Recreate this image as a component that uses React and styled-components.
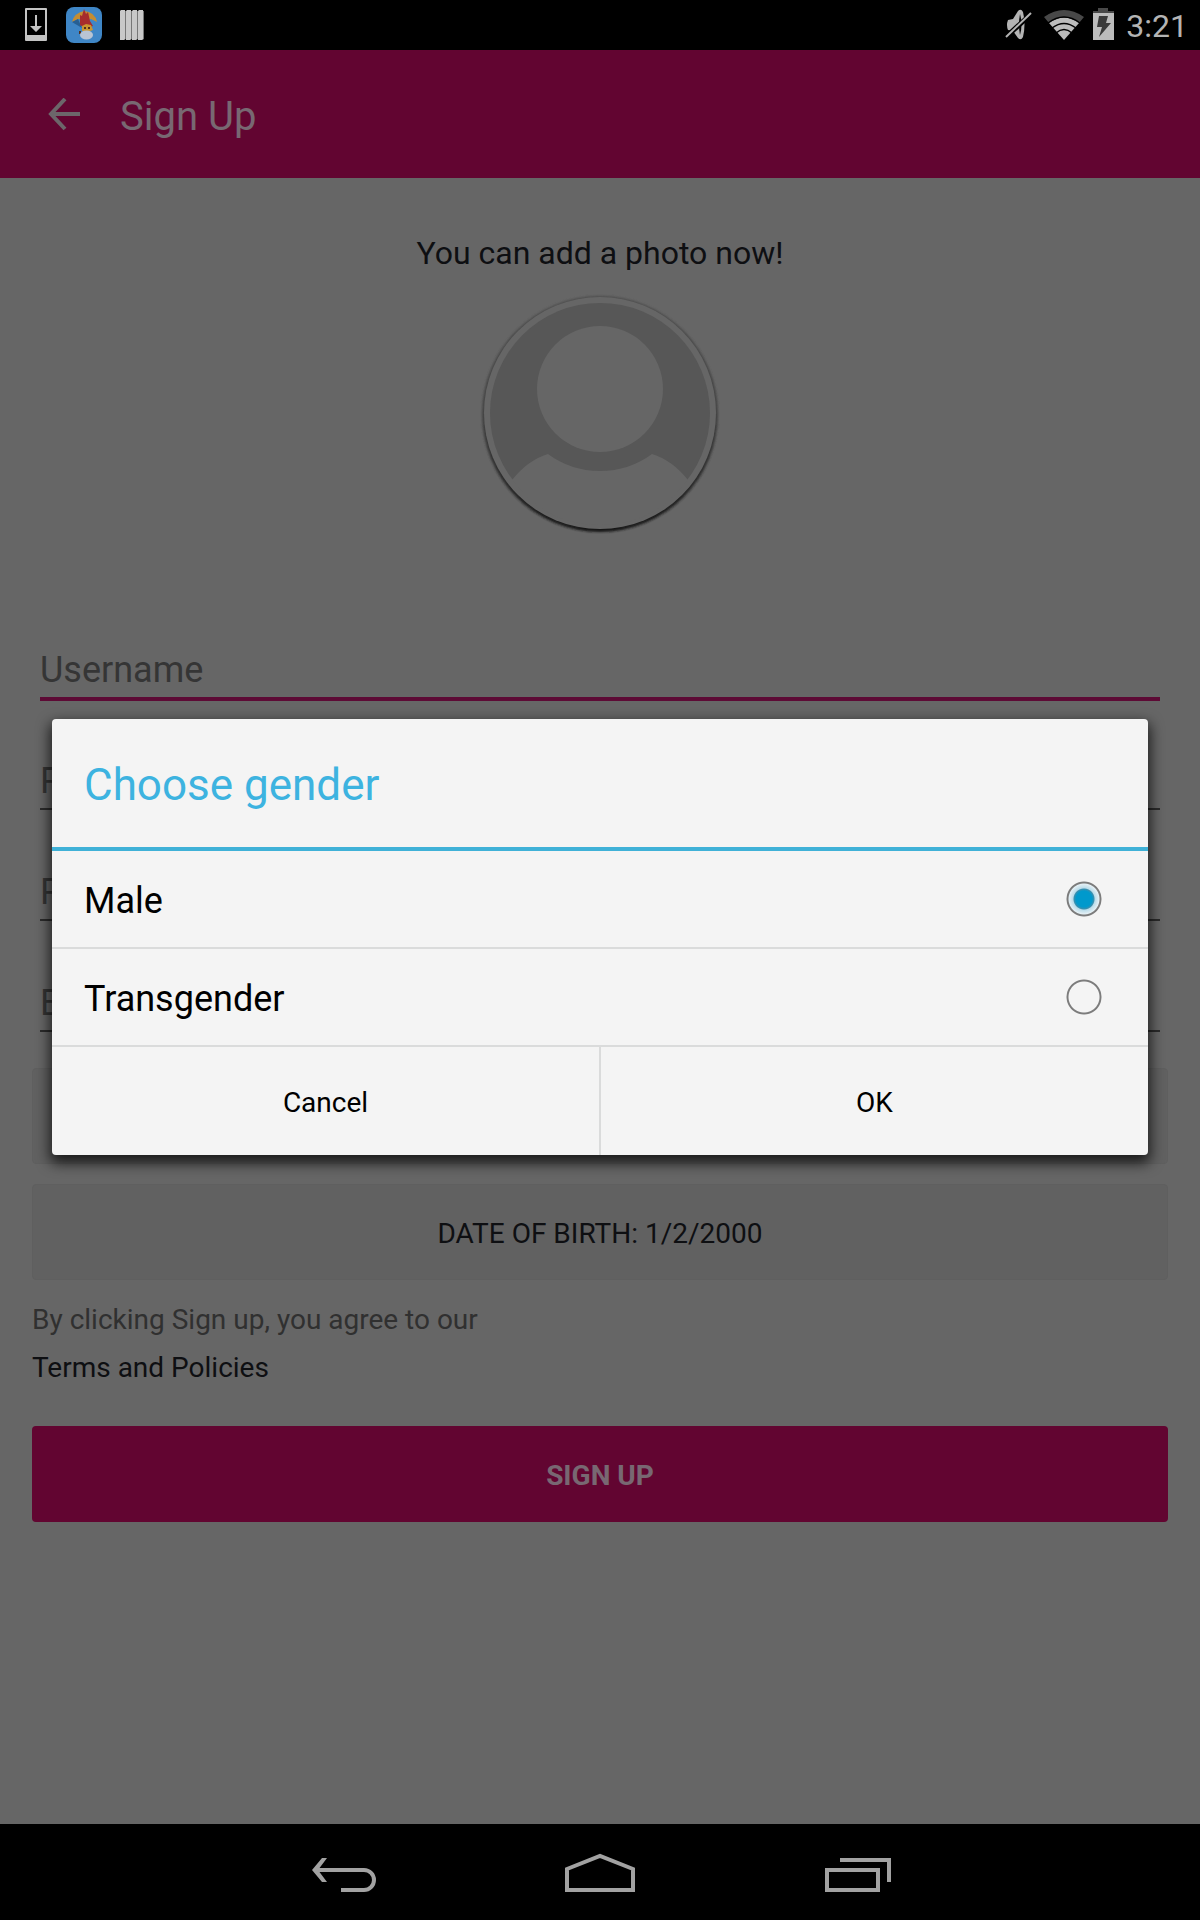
import React, { useState } from "react";
import styled, { createGlobalStyle } from "styled-components";

const GlobalStyle = createGlobalStyle`
  * { box-sizing: border-box; }
  body { margin: 0; background: #666666; font-family: Roboto, "Noto Sans", sans-serif; }
  button, input { font-family: inherit; }
`;

const Screen = styled.div`
  min-height: 100vh;
  display: flex;
  flex-direction: column;
`;

const StatusBar = styled.header`
  height: 50px;
  padding: 0 12px 0 25px;
  display: flex;
  align-items: center;
  justify-content: space-between;
  background: #000;
  color: #b4b4b4;
`;

const StatusGroup = styled.div`
  display: flex;
  align-items: center;
  gap: ${(p) => p.$gap}px;
`;

const Clock = styled.time`
  margin-left: 3px;
  padding-top: 2px;
  font-size: 32px;
  line-height: 40px;
`;

const Body = styled.div`
  position: relative;
  flex: 1;
  display: flex;
  flex-direction: column;
`;

const AppBar = styled.div`
  height: 128px;
  padding: 2px 40px 0;
  display: flex;
  align-items: center;
  gap: 32px;
  background: #620531;
  color: #786872;
`;

const IconButton = styled.button`
  display: flex;
  padding: 0;
  border: 0;
  background: none;
  color: #6c666a;
`;

const ScreenTitle = styled.h1`
  margin: 0;
  padding-top: 4px;
  font-size: 40px;
  line-height: 48px;
  font-weight: 400;
`;

const Form = styled.form`
  display: flex;
  flex-direction: column;
  padding: 56px 32px;
`;

const PhotoPrompt = styled.p`
  margin: 0 0 22px;
  text-align: center;
  font-size: 32px;
  line-height: 38px;
  color: #0e0f12;
`;

const PhotoButton = styled.button`
  align-self: center;
  display: flex;
  margin-bottom: 108px;
  padding: 0;
  border: 0;
  background: none;
`;

const Fields = styled.div`
  display: flex;
  flex-direction: column;
  gap: 54px;
  padding: 0 8px;
  margin-bottom: 36px;
`;

/* The focused line is 2px thicker and grows into the gap below it. */
const Field = styled.input`
  width: 100%;
  height: ${(p) => (p.$active ? 59 : 57)}px;
  margin: 0 0 ${(p) => (p.$active ? -2 : 0)}px;
  padding: 0;
  border: 0;
  border-bottom: ${(p) => (p.$active ? "4px solid #5d0a35" : "2px solid #2b2b2b")};
  outline: none;
  background: none;
  font-size: 36px;
  color: #0e0f12;
  &::placeholder { color: #353535; opacity: 1; }
`;

const Pickers = styled.div`
  display: flex;
  flex-direction: column;
  gap: 20px;
  margin-bottom: 16px;
`;

const FormButton = styled.button`
  height: 96px;
  padding: 4px 0 0;
  border: 1px solid #5f5f5f;
  border-radius: 4px;
  background: #616161;
  font-size: 28px;
  line-height: 32px;
  color: #0e0f12;
  text-transform: uppercase;
`;

const Terms = styled.p`
  margin: 0 0 34px;
  display: flex;
  flex-direction: column;
  align-items: flex-start;
  font-size: 28px;
  line-height: 48px;
  color: #303030;
`;

const TermsLink = styled.a`
  color: #0e0f12;
  text-decoration: none;
`;

const SubmitButton = styled(FormButton)`
  border: 0;
  background: #620531;
  font-weight: 700;
  color: #786872;
`;

const DialogLayer = styled.div`
  position: absolute;
  inset: 0;
  display: flex;
  align-items: center;
  padding: 0 52px;
`;

const Dialog = styled.div`
  flex: 1;
  display: flex;
  flex-direction: column;
  border-radius: 4px;
  background: #f4f4f4;
  box-shadow: 0 6px 14px 2px rgba(0, 0, 0, 0.75);
`;

const DialogTitle = styled.h2`
  margin: 0;
  height: 132px;
  padding: 4px 32px 0;
  display: flex;
  align-items: center;
  border-bottom: 4px solid #3fb1d7;
  font-size: 44px;
  line-height: 52px;
  font-weight: 400;
  color: #3db3e0;
`;

const Option = styled.label`
  height: 98px;
  padding: 0 46px 0 32px;
  display: flex;
  align-items: center;
  justify-content: space-between;
  border-bottom: 2px solid #dadbdb;
  font-size: 36px;
  line-height: 44px;
  color: #000;
`;

const OptionName = styled.span`
  padding-top: 4px;
`;

const Radio = styled.input`
  appearance: none;
  width: 36px;
  height: 36px;
  margin: 0;
  border: 0;
  border-radius: 50%;
  background: radial-gradient(circle, transparent 15px, #7c7c7c 16px, #7c7c7c 17px, transparent 18px);
  &:checked {
    background: radial-gradient(circle, #0099cc 8px, #3a8fae 10px, #b9dcea 11px, #e4eff4 15px, #7c7c7c 16px, #7c7c7c 17px, transparent 18px);
  }
`;

const Actions = styled.div`
  height: 108px;
  display: flex;
`;

const ActionButton = styled.button`
  flex: 1;
  padding: 4px 0 0;
  border: 0;
  border-left: ${(p) => (p.$divided ? "2px solid #dadbdb" : "0")};
  background: none;
  font-size: 28px;
  line-height: 32px;
  color: #000;
`;

const NavBar = styled.nav`
  height: 96px;
  padding-left: 2px;
  display: flex;
  align-items: center;
  justify-content: center;
  gap: 188px;
  background: #000;
`;

const DownloadIcon = () => (
  <svg width="23" height="34" viewBox="0 0 23 34" aria-hidden="true">
    <path fill="#c4c4c4" fillRule="evenodd" d="M1 0h20q1 0 1 1v31q0 1-1 1H1q-1 0-1-1V1q0-1 1-1zM2 2v25h18V2z" />
    <path fill="#c4c4c4" d="M10 7h2v11h5l-6 6L5 18h5z" />
  </svg>
);

const GameIcon = () => (
  <svg width="36" height="36" viewBox="0 0 36 36" aria-hidden="true">
    <rect width="36" height="36" rx="8" fill="#3f86c6" />
    <path fill="#c58d32" d="M6 15Q8 6 18 4Q29 5 31 15L25 12L20 13L12 12z" />
    <path fill="#275f93" d="M6 15L12 12L16 21z" />
    <path fill="#a62c2d" d="M14 17L14 8L16 9L18 2L20 7L22 5L24 14L27 19L24 20H17L14 18z" />
    <path fill="#c9952f" d="M16 19L20 17L25 18L27 23L21 25L16 24z" />
    <path fill="#53301f" d="M18 20h2v2h-2zM22 20h2v2h-2zM13 24h2v3h-2z" />
    <ellipse cx="20.500" cy="28" rx="6.500" ry="4.500" fill="#b9c4d3" />
  </svg>
);

const BarsIcon = () => (
  <svg width="24" height="31" viewBox="0 0 24 31" aria-hidden="true">
    {[0, 6, 12, 18].map((x) => (
      <g key={x}>
        <path fill="#777" d={`M${x + 1} 1h5v28l-2 1h-4z`} />
        <path fill="#c8c8c8" d={`M${x} 1l1-1h4v29l-1 1h-4z`} />
      </g>
    ))}
  </svg>
);

const MutedIcon = () => (
  <svg width="30" height="32" viewBox="0 0 30 32" aria-hidden="true">
    <path fill="#b4b4b4" d="M3 11L8 10L13 2Q16-1 18 3Q21 15 18 28Q16 32 13 29L8 22L3 21Q1 16 3 11z" />
    <path fill="#000" d="M15 5Q18 15 15 26Q13 15 15 5z" />
    <path stroke="#000" strokeWidth="5" d="M1 28L26 5" />
    <path stroke="#b4b4b4" strokeWidth="2" d="M1 28L26 4" />
  </svg>
);

const WifiIcon = () => (
  <svg width="40" height="30" viewBox="0 0 40 30" aria-hidden="true">
    <path fill="#484848" d="M0 7Q20-7 40 7L35 13Q20 2 5 13z" />
    <path fill="#bcbcbc" d="M5 13Q20 2 35 13L20 30z" />
    <path fill="none" stroke="#000" strokeWidth="1.500" d="M4 13Q20 1 36 13M8 18Q20 9 32 18M12 23Q20 16 28 23" />
  </svg>
);

const BatteryIcon = () => (
  <svg width="21" height="34" viewBox="0 0 21 34" aria-hidden="true">
    <path fill="#484848" d="M5 0h10v3h6v4H0V3h5z" />
    <path fill="#bcbcbc" d="M0 5h21v27H0z" />
    <path fill="#3a3a3a" d="M6 8h9l-2 7h5L6 29l3-10H4z" />
  </svg>
);

const ArrowIcon = () => (
  <svg width="48" height="34" viewBox="0 0 48 34" fill="none" stroke="currentColor" strokeWidth="4" aria-hidden="true">
    <path d="M40 16H11M25 1L11 16L25 31" />
  </svg>
);

const AvatarIcon = () => (
  <svg width="240" height="240" viewBox="0 0 240 240" aria-hidden="true">
    <defs>
      <linearGradient id="ring" x1="0" y1="0" x2="0" y2="1">
        <stop offset="0" stopColor="#4c4c4c" />
        <stop offset="0.500" stopColor="#424242" />
        <stop offset="1" stopColor="#181818" />
      </linearGradient>
      <filter id="soft"><feGaussianBlur stdDeviation="1" /></filter>
    </defs>
    <circle cx="120" cy="120" r="118" fill="url(#ring)" filter="url(#soft)" />
    <circle cx="120" cy="119" r="116" fill="#666" />
    <circle cx="120" cy="119" r="110" fill="#575757" />
    <circle cx="120" cy="95" r="63" fill="#666" />
    <path fill="#666" d="M32 186Q48 166 68 160Q91 177 120 177Q149 177 172 160Q192 166 208 186Q175 231 120 231Q65 231 32 186z" />
  </svg>
);

const NavBackIcon = () => (
  <svg width="66" height="40" viewBox="0 0 66 40" aria-hidden="true">
    <path fill="none" stroke="#a2a2a2" strokeWidth="4" d="M4 18H53a10 10 0 0 1 0 20H30" />
    <path fill="#a2a2a2" d="M11 6H16L7 18L16 30H11L1 18z" />
  </svg>
);

const NavHomeIcon = () => (
  <svg width="72" height="40" viewBox="0 0 72 40" fill="none" stroke="#a2a2a2" strokeWidth="4" aria-hidden="true">
    <path d="M2 38V17L35 4L68 17V38z" />
  </svg>
);

const NavRecentsIcon = () => (
  <svg width="66" height="40" viewBox="0 0 66 40" fill="none" stroke="#a2a2a2" strokeWidth="4" aria-hidden="true">
    <path d="M2 18H53V38H2zM15 8H64V30" />
  </svg>
);

export default function App() {
  const [gender, setGender] = useState("Male");
  return (
    <Screen>
      <GlobalStyle />
      <StatusBar>
        <StatusGroup $gap={18}>
          <DownloadIcon />
          <GameIcon />
          <BarsIcon />
        </StatusGroup>
        <StatusGroup $gap={9}>
          <MutedIcon />
          <WifiIcon />
          <BatteryIcon />
          <Clock>3:21</Clock>
        </StatusGroup>
      </StatusBar>
      <Body>
        <AppBar>
          <IconButton aria-label="Back"><ArrowIcon /></IconButton>
          <ScreenTitle>Sign Up</ScreenTitle>
        </AppBar>
        <Form onSubmit={(e) => e.preventDefault()}>
          <PhotoPrompt>You can add a photo now!</PhotoPrompt>
          <PhotoButton type="button" aria-label="Add photo"><AvatarIcon /></PhotoButton>
          <Fields>
            <Field $active placeholder="Username" aria-label="Username" />
            <Field type="password" placeholder="Password" aria-label="Password" />
            <Field type="password" placeholder="Password" aria-label="Repeat password" />
            <Field type="email" placeholder="Email" aria-label="Email" />
          </Fields>
          <Pickers>
            <FormButton type="button" aria-label="Gender" />
            <FormButton type="button">Date of birth: 1/2/2000</FormButton>
          </Pickers>
          <Terms>
            By clicking Sign up, you agree to our
            <TermsLink href="#terms">Terms and Policies</TermsLink>
          </Terms>
          <SubmitButton type="submit">Sign up</SubmitButton>
        </Form>
        <DialogLayer>
          <Dialog role="dialog" aria-labelledby="gender-title">
            <DialogTitle id="gender-title">Choose gender</DialogTitle>
            {["Male", "Transgender"].map((name) => (
              <Option key={name}>
                <OptionName>{name}</OptionName>
                <Radio type="radio" name="gender" checked={gender === name} onChange={() => setGender(name)} />
              </Option>
            ))}
            <Actions>
              <ActionButton type="button">Cancel</ActionButton>
              <ActionButton type="button" $divided>OK</ActionButton>
            </Actions>
          </Dialog>
        </DialogLayer>
      </Body>
      <NavBar>
        <IconButton aria-label="Back"><NavBackIcon /></IconButton>
        <IconButton aria-label="Home"><NavHomeIcon /></IconButton>
        <IconButton aria-label="Recent apps"><NavRecentsIcon /></IconButton>
      </NavBar>
    </Screen>
  );
}
